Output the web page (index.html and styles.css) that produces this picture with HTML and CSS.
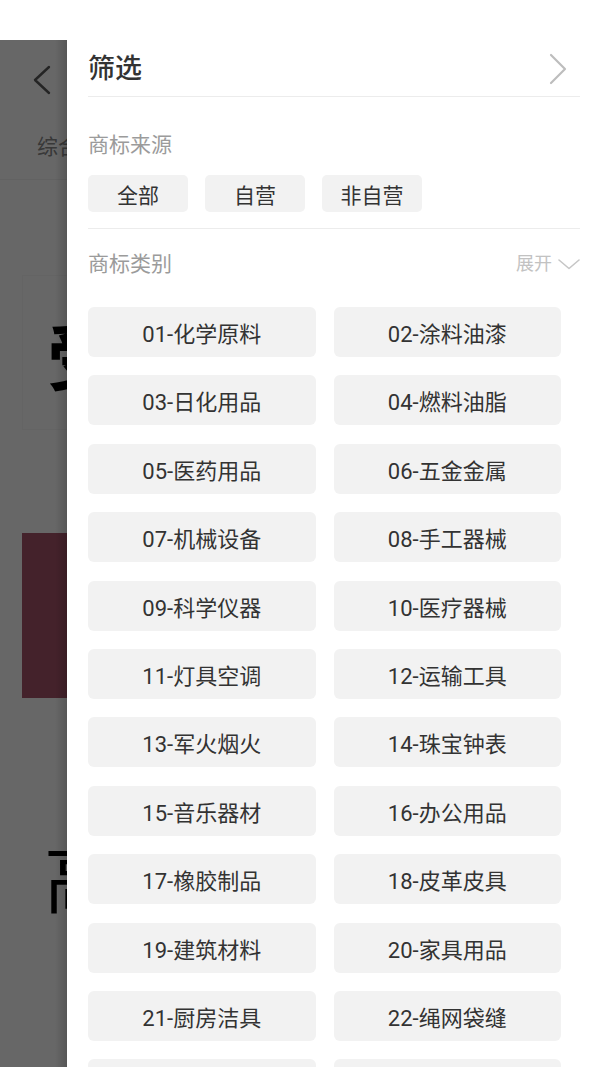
FILE: index.html
```html
<!DOCTYPE html>
<html lang="zh-CN">
<head>
<meta charset="utf-8">
<title>筛选</title>
<link rel="stylesheet" href="styles.css">
</head>
<body>
<div class="screen">
  <div class="page">
    <div class="status"></div>
    <div class="topbar">
      <svg class="back" width="20" height="30" viewBox="0 0 20 30"><polyline points="17,2 3,15 17,28" fill="none" stroke="#5a5a5a" stroke-width="2.4" stroke-linecap="round" stroke-linejoin="round"/></svg>
    </div>
    <div class="tabs"><span class="tab">综合</span></div>
    <div class="card"><span class="big">受</span></div>
    <div class="banner"></div>
    <div class="headline"><span class="big">高</span></div>
  </div>

  <div class="overlay"></div>

  <aside class="drawer">
    <div class="drawer-head">
      <h1 class="drawer-title">筛选</h1>
      <svg class="close" width="20" height="32" viewBox="0 0 20 32"><polyline points="3,2 17,16 3,30" fill="none" stroke="#bdbdbd" stroke-width="2.2" stroke-linecap="round" stroke-linejoin="round"/></svg>
    </div>

    <section class="sec sec-source">
      <div class="sec-label">商标来源</div>
      <div class="chips">
        <span class="chip">全部</span>
        <span class="chip">自营</span>
        <span class="chip">非自营</span>
      </div>
    </section>

    <section class="sec sec-cat">
      <div class="sec-row">
        <div class="sec-label">商标类别</div>
        <div class="expand">展开
          <svg width="22" height="11" viewBox="0 0 22 11"><polyline points="1,1 11,9.5 21,1" fill="none" stroke="#c6c6c6" stroke-width="1.6" stroke-linecap="round" stroke-linejoin="round"/></svg>
        </div>
      </div>
      <div class="grid">
        <span class="cat">01-化学原料</span><span class="cat">02-涂料油漆</span>
        <span class="cat">03-日化用品</span><span class="cat">04-燃料油脂</span>
        <span class="cat">05-医药用品</span><span class="cat">06-五金金属</span>
        <span class="cat">07-机械设备</span><span class="cat">08-手工器械</span>
        <span class="cat">09-科学仪器</span><span class="cat">10-医疗器械</span>
        <span class="cat">11-灯具空调</span><span class="cat">12-运输工具</span>
        <span class="cat">13-军火烟火</span><span class="cat">14-珠宝钟表</span>
        <span class="cat">15-音乐器材</span><span class="cat">16-办公用品</span>
        <span class="cat">17-橡胶制品</span><span class="cat">18-皮革皮具</span>
        <span class="cat">19-建筑材料</span><span class="cat">20-家具用品</span>
        <span class="cat">21-厨房洁具</span><span class="cat">22-绳网袋缝</span>
        <span class="cat">23-纱线丝</span><span class="cat">24-布料床单</span>
      </div>
    </section>
  </aside>
</div>
</body>
</html>
```

FILE: styles.css
```css
* { box-sizing: border-box; }

html, body {
  margin: 0;
  padding: 0;
  background: #ffffff;
}

body {
  font-family: "Roboto", "Noto Sans CJK SC", "Noto Sans", sans-serif;
  color: #333;
}

.screen {
  position: relative;
  width: 600px;
  height: 1067px;
  overflow: hidden;
  background: #fff;
}

/* ---------- underlying page ---------- */
.page {
  display: flex;
  flex-direction: column;
}

.status { height: 40px; }

.topbar {
  height: 80px;
  display: flex;
  align-items: center;
  padding-left: 32px;
}

.tabs {
  height: 60px;
  display: flex;
  align-items: center;
  padding: 0 0 10px 37px;
  border-bottom: 1px solid #f2f2f2;
}

.tab {
  font-size: 21px;
  color: #8a8a8a;
}

.card {
  margin: 95px 0 0 22px;
  width: 556px;
  height: 155px;
  border: 1px solid #f7f7f7;
  display: flex;
  align-items: center;
  padding-left: 24px;
}

.big {
  font-family: "Noto Sans CJK SC", sans-serif;
  font-weight: 700;
  font-size: 74px;
  line-height: 1;
  color: #000;
}

.banner {
  margin: 103px 0 0 22px;
  width: 556px;
  height: 165px;
  background: #a8546a;
}

.headline {
  margin-top: 138px;
  padding-left: 44px;
  display: flex;
}

.headline .big {
  font-weight: 400;
  font-size: 76px;
}

/* ---------- overlay & drawer ---------- */
.overlay {
  position: absolute;
  left: 0;
  right: 0;
  top: 40px;
  bottom: 0;
  background: rgba(0, 0, 0, 0.595);
}

.drawer {
  position: absolute;
  left: 67px;
  right: 0;
  top: 40px;
  bottom: 0;
  background: #fff;
  padding: 0 20px 0 21px;
}

.drawer::before {
  content: "";
  position: absolute;
  top: 0;
  bottom: 0;
  left: -12px;
  width: 12px;
  background: linear-gradient(to right, rgba(0, 0, 0, 0), rgba(0, 0, 0, 0.16));
}

.drawer-inner { overflow: hidden; }

.drawer-head {
  height: 57px;
  display: flex;
  align-items: center;
  justify-content: space-between;
  border-bottom: 1px solid #ececec;
  padding: 2px 12px 0 0;
}

.drawer-title {
  margin: 0;
  font-size: 27px;
  font-weight: 500;
  color: #333;
  line-height: 1;
}

.sec-source {
  padding: 33px 0 16px;
  border-bottom: 1px solid #ececec;
}

.sec-label {
  font-size: 21px;
  line-height: 30px;
  color: #9b9b9b;
}

.chips {
  display: flex;
  gap: 17px;
  margin-top: 15px;
}

.chip {
  width: 100px;
  height: 37px;
  border-radius: 5px;
  background: #f2f2f2;
  display: flex;
  align-items: center;
  justify-content: center;
  font-size: 21px;
  color: #333;
}

.sec-cat {
  padding-top: 20px;
  overflow: hidden;
}

.sec-row {
  display: flex;
  align-items: center;
  justify-content: space-between;
}

.expand {
  display: flex;
  align-items: center;
  gap: 6px;
  font-size: 18px;
  color: #c2c2c2;
  line-height: 30px;
}

.grid {
  margin-top: 28px;
  padding-right: 19px;
  display: grid;
  grid-template-columns: 1fr 1fr;
  column-gap: 18px;
  row-gap: 18.4px;
}

.cat {
  height: 50px;
  border-radius: 6px;
  background: #f2f2f2;
  display: flex;
  align-items: center;
  justify-content: center;
  font-size: 22px;
  color: #333;
}
```
